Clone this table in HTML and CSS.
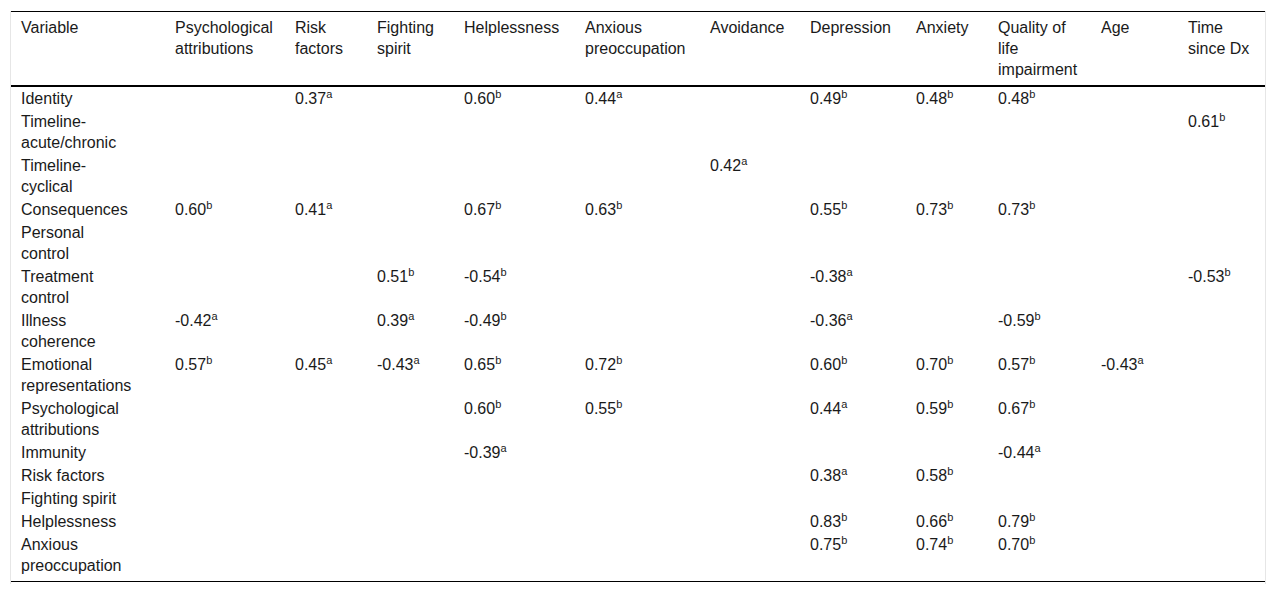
FILE: index.html
```html
<!DOCTYPE html>
<html lang="en">
<head>
<meta charset="utf-8">
<title>Correlations table</title>
<link rel="stylesheet" href="styles.css">
</head>
<body>
<div class="table-wrap">
<table class="corr">
<colgroup>
<col class="c-var"><col class="c-psy"><col class="c-risk"><col class="c-fight"><col class="c-help"><col class="c-anxp"><col class="c-avoid"><col class="c-dep"><col class="c-anx"><col class="c-qol"><col class="c-age"><col class="c-time">
</colgroup>
<thead>
<tr>
<th class="first">Variable</th><th>Psychological attributions</th><th>Risk factors</th><th>Fighting spirit</th><th>Helplessness</th><th>Anxious preoccupation</th><th>Avoidance</th><th>Depression</th><th>Anxiety</th><th>Quality of life impairment</th><th>Age</th><th>Time since Dx</th>
</tr>
</thead>
<tbody>
<tr><td class="first">Identity</td><td></td><td>0.37<sup>a</sup></td><td></td><td>0.60<sup>b</sup></td><td>0.44<sup>a</sup></td><td></td><td>0.49<sup>b</sup></td><td>0.48<sup>b</sup></td><td>0.48<sup>b</sup></td><td></td><td></td></tr>
<tr><td class="first">Timeline-acute/chronic</td><td></td><td></td><td></td><td></td><td></td><td></td><td></td><td></td><td></td><td></td><td>0.61<sup>b</sup></td></tr>
<tr><td class="first">Timeline-cyclical</td><td></td><td></td><td></td><td></td><td></td><td>0.42<sup>a</sup></td><td></td><td></td><td></td><td></td><td></td></tr>
<tr><td class="first">Consequences</td><td>0.60<sup>b</sup></td><td>0.41<sup>a</sup></td><td></td><td>0.67<sup>b</sup></td><td>0.63<sup>b</sup></td><td></td><td>0.55<sup>b</sup></td><td>0.73<sup>b</sup></td><td>0.73<sup>b</sup></td><td></td><td></td></tr>
<tr><td class="first">Personal control</td><td></td><td></td><td></td><td></td><td></td><td></td><td></td><td></td><td></td><td></td><td></td></tr>
<tr><td class="first">Treatment control</td><td></td><td></td><td>0.51<sup>b</sup></td><td>-0.54<sup>b</sup></td><td></td><td></td><td>-0.38<sup>a</sup></td><td></td><td></td><td></td><td>-0.53<sup>b</sup></td></tr>
<tr><td class="first">Illness coherence</td><td>-0.42<sup>a</sup></td><td></td><td>0.39<sup>a</sup></td><td>-0.49<sup>b</sup></td><td></td><td></td><td>-0.36<sup>a</sup></td><td></td><td>-0.59<sup>b</sup></td><td></td><td></td></tr>
<tr><td class="first">Emotional representations</td><td>0.57<sup>b</sup></td><td>0.45<sup>a</sup></td><td>-0.43<sup>a</sup></td><td>0.65<sup>b</sup></td><td>0.72<sup>b</sup></td><td></td><td>0.60<sup>b</sup></td><td>0.70<sup>b</sup></td><td>0.57<sup>b</sup></td><td>-0.43<sup>a</sup></td><td></td></tr>
<tr><td class="first">Psychological attributions</td><td></td><td></td><td></td><td>0.60<sup>b</sup></td><td>0.55<sup>b</sup></td><td></td><td>0.44<sup>a</sup></td><td>0.59<sup>b</sup></td><td>0.67<sup>b</sup></td><td></td><td></td></tr>
<tr><td class="first">Immunity</td><td></td><td></td><td></td><td>-0.39<sup>a</sup></td><td></td><td></td><td></td><td></td><td>-0.44<sup>a</sup></td><td></td><td></td></tr>
<tr><td class="first">Risk factors</td><td></td><td></td><td></td><td></td><td></td><td></td><td>0.38<sup>a</sup></td><td>0.58<sup>b</sup></td><td></td><td></td><td></td></tr>
<tr><td class="first">Fighting spirit</td><td></td><td></td><td></td><td></td><td></td><td></td><td></td><td></td><td></td><td></td><td></td></tr>
<tr><td class="first">Helplessness</td><td></td><td></td><td></td><td></td><td></td><td></td><td>0.83<sup>b</sup></td><td>0.66<sup>b</sup></td><td>0.79<sup>b</sup></td><td></td><td></td></tr>
<tr><td class="first">Anxious preoccupation</td><td></td><td></td><td></td><td></td><td></td><td></td><td>0.75<sup>b</sup></td><td>0.74<sup>b</sup></td><td>0.70<sup>b</sup></td><td></td><td></td></tr>
</tbody>
</table>
</div>
</body>
</html>
```

FILE: styles.css
```css
html, body {
  margin: 0;
  padding: 0;
  background: #fff;
}

body {
  font-family: "Liberation Sans", Arial, sans-serif;
  font-size: 16px;
  line-height: 21px;
  color: #1a1a1a;
}

.table-wrap {
  width: 1254px;
  margin: 11px 10px 0;
  padding-bottom: 2px;
  border-left: 1px solid #e6e6e6;
  border-right: 1px solid #e6e6e6;
}

.corr {
  width: 1254px;
  table-layout: fixed;
  border-collapse: separate;
  border-spacing: 0;
}

.c-var { width: 154px; }
.c-psy { width: 120px; }
.c-risk { width: 82px; }
.c-fight { width: 87px; }
.c-help { width: 121px; }
.c-anxp { width: 125px; }
.c-avoid { width: 100px; }
.c-dep { width: 106px; }
.c-anx { width: 82px; }
.c-qol { width: 103px; }
.c-age { width: 87px; }
.c-time { width: 87px; }

.corr th,
.corr td {
  text-align: left;
  vertical-align: top;
  font-weight: normal;
  padding: 1px 10px;
}

.corr th {
  padding-top: 5px;
  padding-bottom: 5px;
  border-top: 1px solid #000;
  border-bottom: 2px solid #000;
}

.corr td.first {
  padding-right: 31px;
}

.corr tbody tr:last-child td {
  padding-bottom: 5px;
  border-bottom: 1px solid #000;
}

.corr sup {
  font-size: 11px;
  line-height: 0;
  vertical-align: 6px;
}
```
